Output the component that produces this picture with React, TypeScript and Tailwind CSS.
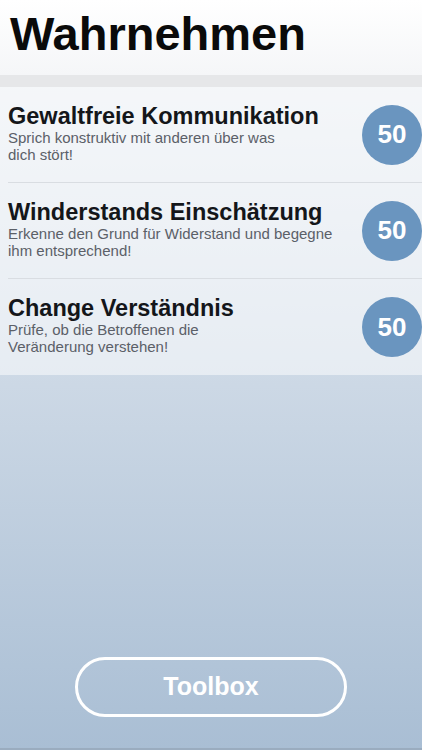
import React from "react";

const items = [
  { title: "Gewaltfreie Kommunikation", lines: ["Sprich konstruktiv mit anderen über was", "dich stört!"] },
  { title: "Winderstands Einschätzung", lines: ["Erkenne den Grund für Widerstand und begegne", "ihm entsprechend!"] },
  { title: "Change Verständnis", lines: ["Prüfe, ob die Betroffenen die", "Veränderung verstehen!"] },
];

export default function App() {
  return (
    <div
      className="w-[422px] h-[750px] flex flex-col overflow-hidden bg-gradient-to-b from-[#f2f4f7] to-[#a9bed4]"
      style={{ fontFamily: '"Liberation Sans", Arial, sans-serif' }}
    >
      <div className="h-[75px] bg-gradient-to-b from-[#ffffff] to-[#f5f6f8] pl-[10px] pt-[10px]">
        <h1 className="text-[47px] leading-none font-bold text-[#0a0a0a]">Wahrnehmen</h1>
      </div>
      <div className="h-[12px] bg-[#e6e7e9]" />
      <div className="flex flex-col">
        {items.map((it, i) => (
          <div key={i} className="bg-white/50 pl-[8px]">
            <div
              className={
                "h-[96px] flex items-center justify-between " +
                (i < items.length - 1 ? "border-b border-[#d9dde2]" : "")
              }
            >
              <div className="pb-[4px]">
                <div className="text-[23.5px] leading-[26px] font-bold text-[#14161a]">{it.title}</div>
                <div className="text-[15px] leading-[17px] text-[#5b6068]">
                  {it.lines[0]}
                  <br />
                  {it.lines[1]}
                </div>
              </div>
              <div className="w-[60px] h-[60px] shrink-0 rounded-full bg-[#6a95bf] flex items-center justify-center text-white font-bold text-[26px]">
                50
              </div>
            </div>
          </div>
        ))}
      </div>
      <div className="flex-1" />
      <div className="flex justify-center pb-[31px]">
        <div className="w-[272px] h-[60px] rounded-full border-[3px] border-white flex items-center justify-center text-white font-bold text-[25px]">
          Toolbox
        </div>
      </div>
      <div className="h-[2px] bg-[#9aacbf]" />
    </div>
  );
}
